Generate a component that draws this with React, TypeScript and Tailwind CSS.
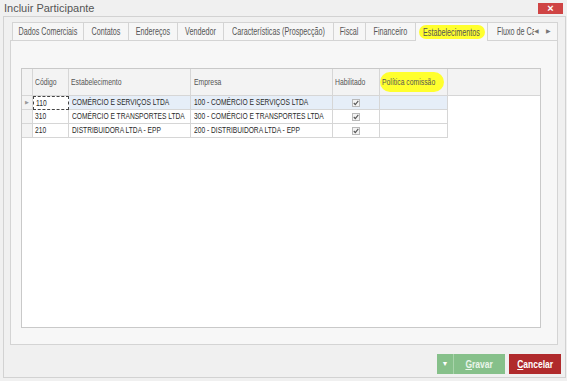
import React from "react";

const FONT = "font-['Liberation_Sans',Arial,sans-serif]";

function T({ children, c = "origin-left" }: { children: React.ReactNode; c?: string }) {
  return <span className={`inline-block whitespace-nowrap scale-x-[0.72] ${c}`}>{children}</span>;
}

function D({ children }: { children: React.ReactNode }) {
  return <span className="inline-block whitespace-nowrap scale-x-[0.7] origin-left">{children}</span>;
}

const tabs: { label: string; w: string; selected?: boolean }[] = [
  { label: "Dados Comerciais", w: "w-[71px]" },
  { label: "Contatos", w: "w-[45px]" },
  { label: "Endereços", w: "w-[49px]" },
  { label: "Vendedor", w: "w-[46px]" },
  { label: "Características (Prospecção)", w: "w-[110px]" },
  { label: "Fiscal", w: "w-[32px]" },
  { label: "Financeiro", w: "w-[50px]" },
  { label: "Estabelecimentos", w: "w-[72px]", selected: true },
];

const rows = [
  { cod: "110", est: "COMÉRCIO E SERVIÇOS LTDA", emp: "100 - COMÉRCIO E SERVIÇOS LTDA", sel: true },
  { cod: "310", est: "COMÉRCIO E TRANSPORTES LTDA", emp: "300 - COMÉRCIO E TRANSPORTES LTDA" },
  { cod: "210", est: "DISTRIBUIDORA LTDA - EPP", emp: "200 - DISTRIBUIDORA LTDA - EPP" },
];

function Check() {
  return (
    <div className="w-[8px] h-[8px] border border-[#b9b9b9] bg-[#f4f4f4] flex items-center justify-center">
      <svg width="6" height="6" viewBox="0 0 6 6">
        <path d="M0.8 3 L2.3 4.6 L5.3 0.9" fill="none" stroke="#555" strokeWidth="1.1" />
      </svg>
    </div>
  );
}

export default function App() {
  return (
    <div className={`w-[567px] h-[381px] bg-[#f0f0f0] overflow-hidden ${FONT}`}>
      {/* title bar */}
      <div className="h-[16px] flex items-start justify-between">
        <div className="pl-[4px] pt-[1px] text-[11px] leading-[14px] text-[#555]">Incluir Participante</div>
        <div className="mt-[3px] mr-[4px] w-[25px] h-[11px] bg-[#cf4444] flex items-center justify-center text-white text-[11px] leading-none font-bold">
          ×
        </div>
      </div>

      {/* frame */}
      <div className="ml-[3px] w-[563px] h-[362px] border border-[#d2d2d2] flex flex-col">
        {/* tabs */}
        <div className="mt-[5px] ml-[8px] w-[546px] h-[18px] flex border-t border-l border-r border-[#d4d4d4] bg-[#f6f6f6] relative z-10">
          {tabs.map((t) => (
            <div
              key={t.label}
              className={`${t.w} shrink-0 border-r border-[#d4d4d4] flex items-center justify-center text-[10px] text-[#555] ${
                t.selected ? "h-[18px] bg-[#f8f8f8]" : "h-[17px]"
              }`}
            >
              {t.selected ? (
                <span className="bg-[#ffff2e] rounded-[8px] w-[66px] h-[14px] flex items-center justify-center">
                  <T c="origin-center">{t.label}</T>
                </span>
              ) : (
                <T c="origin-center">{t.label}</T>
              )}
            </div>
          ))}
          <div className="w-[46px] h-[17px] shrink-0 overflow-hidden flex items-center pl-[9px] text-[10px] text-[#555]">
            <T>Fluxo de Caixa</T>
          </div>
          <div className="flex-1 h-[17px] flex items-center justify-end gap-[7px] pr-[7px] text-[6px] text-[#777]">
            <span>◀</span>
            <span>▶</span>
          </div>
        </div>

        {/* panel */}
        <div className="ml-[6px] w-[548px] h-[305px] border border-[#d4d4d4] bg-[#f7f7f7] shrink-0">
          <div className="ml-[10px] mt-[27px] w-[520px] h-[260px] border border-[#c9c9c9] bg-white flex flex-col">
            {/* header */}
            <div className="h-[27px] flex border-b border-[#d6d6d6] bg-[#f3f3f3] text-[9.5px] text-[#555]">
              <div className="w-[11px] shrink-0 border-r border-[#d6d6d6]" />
              <div className="w-[36px] shrink-0 border-r border-[#d6d6d6] flex items-center pl-[2px] pt-[1px]"><T>Código</T></div>
              <div className="w-[122px] shrink-0 border-r border-[#d6d6d6] flex items-center pl-[2px] pt-[1px]"><T>Estabelecimento</T></div>
              <div className="w-[142px] shrink-0 border-r border-[#d6d6d6] flex items-center pl-[3px] pt-[1px]"><T>Empresa</T></div>
              <div className="w-[47px] shrink-0 border-r border-[#d6d6d6] flex items-center pl-[2px] pt-[1px]"><T>Habilitado</T></div>
              <div className="w-[68px] shrink-0 border-r border-[#d6d6d6] flex items-center py-[2px]">
                <div className="w-[64px] h-[20px] bg-[#ffff2e] rounded-[10px] flex items-center pl-[2px] pt-[1px]"><T>Política comissão</T></div>
              </div>
              <div className="flex-1" />
            </div>
            {/* rows */}
            {rows.map((r) => (
              <div key={r.cod} className="h-[14px] flex text-[9.5px] text-[#2a2a2a]">
                <div className="w-[11px] shrink-0 border-r border-b border-[#d6d6d6] bg-[#f3f3f3] flex items-center justify-center text-[5px] text-[#999]">
                  {r.sel ? "▶" : ""}
                </div>
                <div
                  className={`w-[36px] shrink-0 flex items-center pl-[2px] ${
                    r.sel ? "border border-dashed border-[#444] bg-white" : "border-r border-b border-[#d6d6d6]"
                  }`}
                >
                  <D>{r.cod}</D>
                </div>
                <div className={`w-[122px] shrink-0 border-r border-b border-[#d6d6d6] flex items-center pl-[3px] ${r.sel ? "bg-[#e6eef8]" : ""}`}>
                  <D>{r.est}</D>
                </div>
                <div className={`w-[142px] shrink-0 border-r border-b border-[#d6d6d6] flex items-center pl-[3px] ${r.sel ? "bg-[#e6eef8]" : ""}`}>
                  <D>{r.emp}</D>
                </div>
                <div className={`w-[47px] shrink-0 border-r border-b border-[#d6d6d6] flex items-center justify-center ${r.sel ? "bg-[#e6eef8]" : ""}`}>
                  <Check />
                </div>
                <div className={`w-[68px] shrink-0 border-r border-b border-[#d6d6d6] ${r.sel ? "bg-[#e6eef8]" : ""}`} />
              </div>
            ))}
          </div>
        </div>

        {/* buttons */}
        <div className="mt-[9px] flex justify-end gap-[4px] pr-[4px]">
          <div className="h-[20px] w-[68px] bg-[#86c08a] flex text-[10px] font-bold">
            <div className="w-[17px] border-r border-[#a9d4ab] flex items-center justify-center text-[7px] text-white">▼</div>
            <div className="flex-1 flex items-center justify-center text-[#eaf5ea]">
              <span className="inline-block scale-x-[0.85] origin-center"><span className="underline">G</span>ravar</span>
            </div>
          </div>
          <div className="h-[20px] w-[52px] bg-[#b02a2c] flex items-center justify-center text-[10px] font-bold text-white">
            <span className="inline-block scale-x-[0.85] origin-center"><span className="underline">C</span>ancelar</span>
          </div>
        </div>
      </div>
    </div>
  );
}
